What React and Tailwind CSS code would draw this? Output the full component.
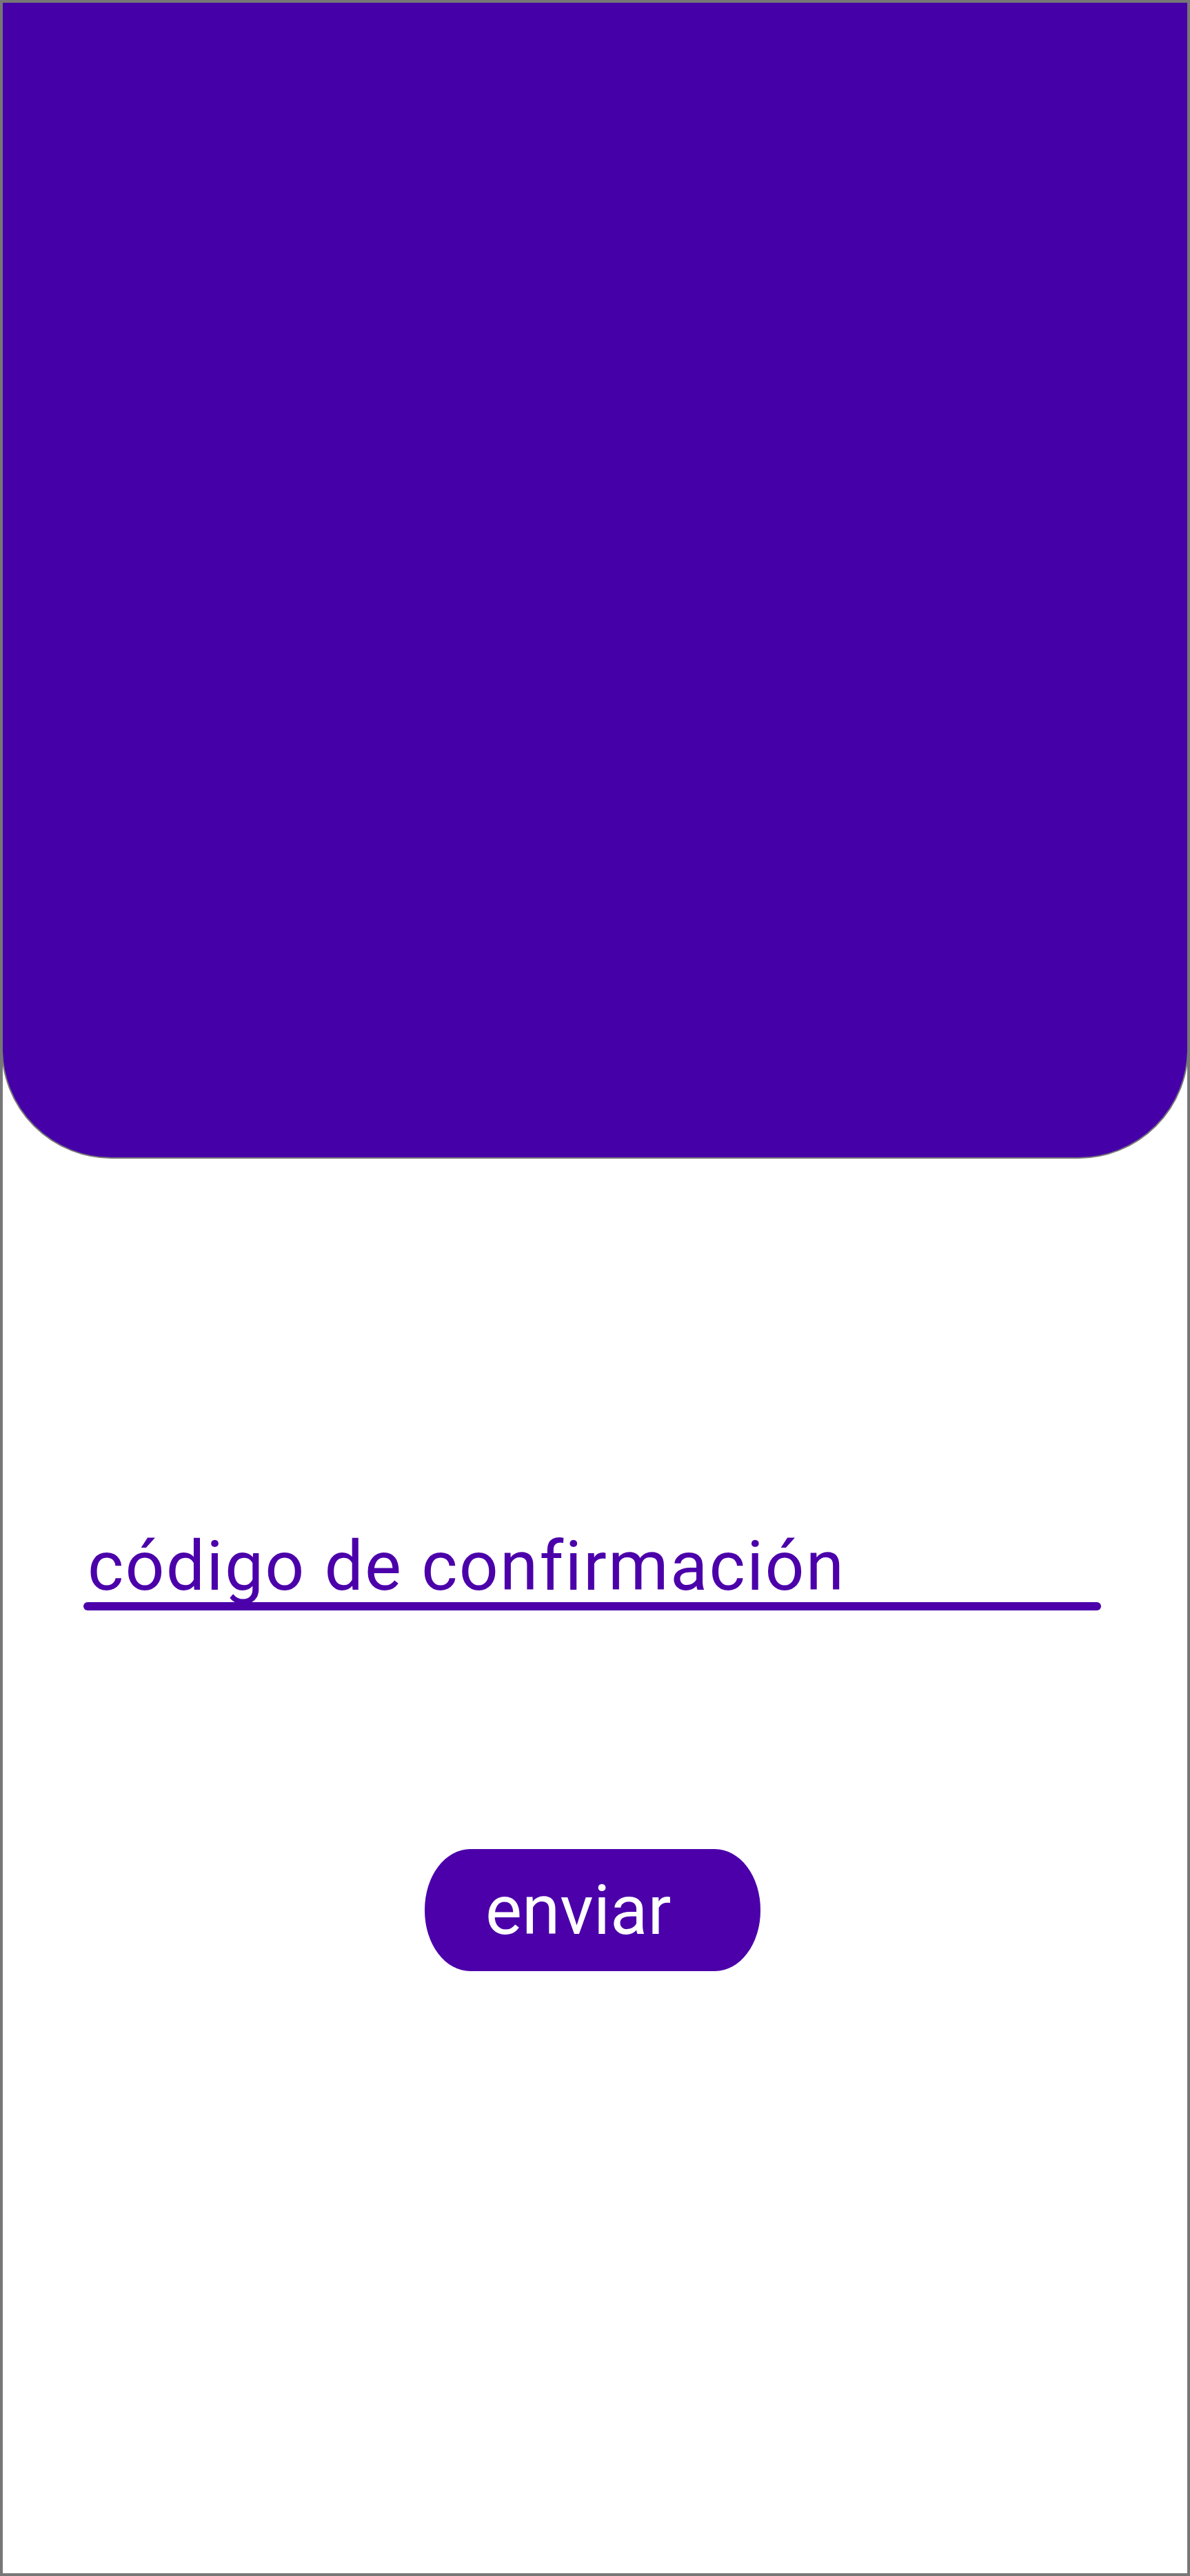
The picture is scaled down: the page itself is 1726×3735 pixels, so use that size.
export default function App() {
  return (
    <div
      className="w-[1726px] h-[3735px] border-4 border-[#777777] bg-white overflow-hidden [font-variant-ligatures:none]"
      style={{ fontFamily: 'Roboto, "Noto Sans", sans-serif' }}
    >
      {/* Header */}
      <div className="-mx-[2px] -mt-[2px] h-[1678px] bg-[#4600a8] border-2 border-[#777777] rounded-b-[160px]" />

      {/* Campo de código */}
      <div className="mt-[541px] ml-[117px] w-[1476px]">
        <div className="pl-[6px] text-[100px] leading-none tracking-[2.2px] text-[#4b00aa]">código de confirmación</div>
        <div className="mt-[2px] h-[12px] rounded-full bg-[#4b00aa]" />
      </div>

      {/* Botón */}
      <button className="mt-[346px] ml-[612px] w-[487px] h-[177px] rounded-[66px/88px] bg-[#4b00aa] text-white text-[100px] leading-none flex items-center pl-[88px]">
        enviar
      </button>
    </div>
  );
}
